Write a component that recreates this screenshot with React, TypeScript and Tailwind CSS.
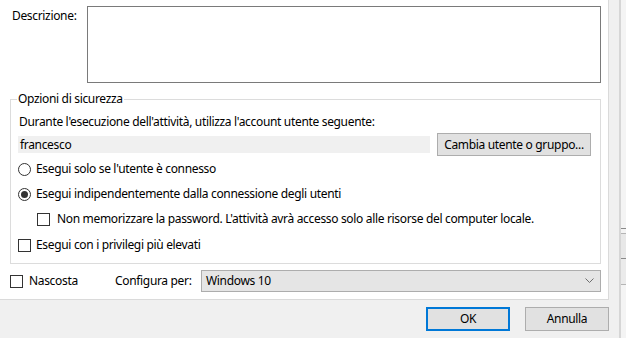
import React from "react";

const Checkbox = () => (
  <span className="inline-block w-[13px] h-[13px] border border-[#333333] bg-white shrink-0" />
);

const Radio = ({ checked }: { checked?: boolean }) => (
  <span className="w-[13px] h-[13px] rounded-full border border-[#333333] bg-white shrink-0 flex items-center justify-center">
    {checked && <span className="w-[7px] h-[7px] rounded-full bg-[#333333]" />}
  </span>
);

export default function App() {
  return (
    <div className="w-[626px] h-[338px] overflow-hidden flex font-['Noto_Sans',sans-serif] text-[12px] leading-[16px] tracking-[-0.33px] text-black">
      <div className="w-[619px] h-full bg-[#f0f0f0] flex flex-col shrink-0">
        <div className="w-[609px] h-[300px] bg-white border-r border-b border-[#dadada] flex flex-col shrink-0">
          {/* Description */}
          <div className="flex pt-[6px] pl-[12px]">
            <div className="w-[75px] pt-[2px]">Descrizione:</div>
            <div className="w-[514px] h-[77px] border border-[#7a7a7a] bg-white" />
          </div>

          {/* Group box */}
          <fieldset className="ml-[10px] mt-[8px] w-[591px] border border-[#dcdcdc] pl-[7px] pr-[9px] pb-[9px]">
            <legend className="px-[1px] ml-[-1px] leading-[16px]">Opzioni di sicurezza</legend>
            <div className="mt-[6px] h-[18px] flex items-center pl-[1px]">
              Durante l'esecuzione dell'attività, utilizza l'account utente seguente:
            </div>
            <div className="mt-[2px] h-[23px] flex items-center justify-between">
              <div className="w-[412px] h-[17px] bg-[#f0f0f0] flex items-center pl-[2px]">francesco</div>
              <button className="w-[154px] h-[23px] bg-[#e1e1e1] border border-[#adadad] flex items-center justify-center">
                Cambia utente o gruppo...
              </button>
            </div>
            <div className="mt-[4px] h-[18px] flex items-center gap-[5px]">
              <Radio />
              <span>Esegui solo se l'utente è connesso</span>
            </div>
            <div className="mt-[7px] h-[18px] flex items-center gap-[5px]">
              <Radio checked />
              <span>Esegui indipendentemente dalla connessione degli utenti</span>
            </div>
            <div className="mt-[7px] h-[18px] flex items-center gap-[7px] pl-[19px]">
              <Checkbox />
              <span>Non memorizzare la password. L'attività avrà accesso solo alle risorse del computer locale.</span>
            </div>
            <div className="mt-[8px] h-[18px] flex items-center gap-[5px]">
              <Checkbox />
              <span>Esegui con i privilegi più elevati</span>
            </div>
          </fieldset>

          {/* Bottom row */}
          <div className="mt-[6px] h-[22px] flex items-center pl-[10px]">
            <Checkbox />
            <span className="ml-[6px] w-[86px]">Nascosta</span>
            <span className="w-[86px]">Configura per:</span>
            <div className="w-[400px] h-[22px] bg-[#e5e5e5] border border-[#adadad] flex items-center justify-between pl-[4px] pr-[6px]">
              <span>Windows 10</span>
              <svg width="9" height="6" viewBox="0 0 9 6" fill="none">
                <path d="M0.5 0.5 L4.5 4.5 L8.5 0.5" stroke="#6d6d6d" strokeWidth="1" />
              </svg>
            </div>
          </div>
        </div>

        {/* Buttons */}
        <div className="flex justify-end gap-[15px] pt-[7px] pr-[10px]">
          <button className="w-[84px] h-[24px] bg-[#e1e1e1] border-2 border-[#0078d7] flex items-center justify-center">
            OK
          </button>
          <button className="w-[84px] h-[24px] bg-[#e1e1e1] border border-[#adadad] flex items-center justify-center">
            Annulla
          </button>
        </div>
      </div>
      <div className="w-[2px] h-full bg-[#d6d6d6] shrink-0" />
      <div className="flex-1 h-full bg-[#f4f4f4] flex flex-col">
        <div className="h-[228px]" />
        <div className="h-[1px] bg-[#8a8a8a]" />
        <div className="h-[4px]" />
        <div className="h-[1px] bg-[#b5b5b5]" />
        <div className="h-[24px] bg-[#e8e8e8]" />
        <div className="h-[1px] bg-[#8a8a8a]" />
        <div className="h-[25px] bg-[#ebebeb]" />
        <div className="h-[1px] bg-[#b5b5b5]" />
      </div>
    </div>
  );
}
